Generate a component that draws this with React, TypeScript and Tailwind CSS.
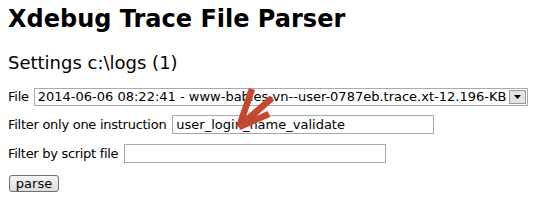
import React from "react";

const font = { fontFamily: '"DejaVu Sans", Verdana, sans-serif' };

export default function App() {
  return (
    <div className="relative w-[538px] h-[201px] bg-white text-black overflow-hidden" style={font}>
      <div className="pl-[8px] pt-[5px]">
        <h1 className="text-[24px] leading-[28px] font-bold m-0">Xdebug Trace File Parser</h1>
        <h2 className="text-[18px] leading-[22px] font-normal mt-[19px]">Settings c:\logs (1)</h2>
        <div className="mt-[14px] flex items-center text-[13px] h-[18px]">
          <span className="mr-[5px] tracking-[-0.25px]">File</span>
          <div className="relative w-[494px] h-[18px] border border-[#a5acb2] flex items-center pl-[3px] whitespace-nowrap overflow-hidden">
            <span className="leading-[16px]">2014-06-06 08:22:41 - www-babies-vn--user-0787eb.trace.xt-12.196-KB</span>
            <div className="absolute right-[1px] top-[1px] w-[17px] h-[14px] bg-[#e4e4e4] border border-[#9a9a9a] flex items-center justify-center">
              <svg width="7" height="4" viewBox="0 0 7 4"><path d="M0 0H7L3.5 4Z" fill="#000" /></svg>
            </div>
          </div>
        </div>
        <div className="mt-[9px] flex items-center text-[13px] h-[19px]">
          <span className="mr-[6px] tracking-[-0.27px]">Filter only one instruction</span>
          <div className="w-[262px] h-[19px] border border-[#a9a9a9] pl-[3px] leading-[17px]">user_login_name_validate</div>
        </div>
        <div className="mt-[10px] flex items-center text-[13px] h-[19px]">
          <span className="mr-[6px] tracking-[-0.3px]">Filter by script file</span>
          <div className="w-[262px] h-[19px] border border-[#a9a9a9]"></div>
        </div>
        <div className="mt-[12px] ml-[1px]">
          <div className="w-[50px] h-[17px] rounded-[3px] border border-[#707070] bg-gradient-to-b from-[#f6f6f6] to-[#dcdcdc] text-[13px] leading-[15px] flex items-center justify-center">parse</div>
        </div>
      </div>
      <svg className="absolute left-0 top-0 pointer-events-none" width="538" height="201" viewBox="0 0 538 201">
        <g stroke="#c4472f" strokeWidth="6.5" strokeLinecap="butt" fill="none">
          <line x1="241" y1="125" x2="272" y2="98" />
          <line x1="239" y1="127" x2="252" y2="89" />
          <line x1="239" y1="127" x2="269" y2="114" />
        </g>
      </svg>
    </div>
  );
}
